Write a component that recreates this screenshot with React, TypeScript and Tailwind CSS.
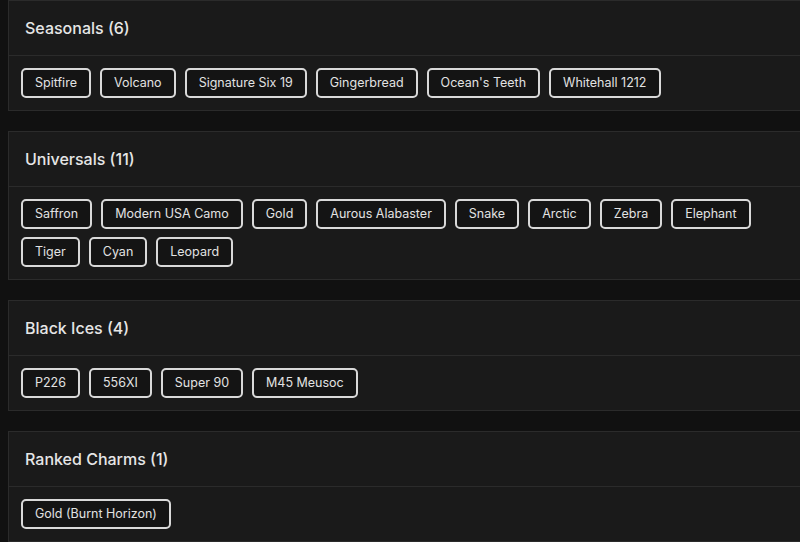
import React from 'react';

const groups: { title: string; items: string[] }[] = [
  { title: 'Seasonals (6)', items: ['Spitfire', 'Volcano', 'Signature Six 19', 'Gingerbread', "Ocean's Teeth", 'Whitehall 1212'] },
  {
    title: 'Universals (11)',
    items: ['Saffron', 'Modern USA Camo', 'Gold', 'Aurous Alabaster', 'Snake', 'Arctic', 'Zebra', 'Elephant', 'Tiger', 'Cyan', 'Leopard'],
  },
  { title: 'Black Ices (4)', items: ['P226', '556XI', 'Super 90', 'M45 Meusoc'] },
  { title: 'Ranked Charms (1)', items: ['Gold (Burnt Horizon)'] },
];

const Chip = ({ label }: { label: string }) => (
  <span className="inline-flex h-[30px] items-center rounded-[5px] border-2 border-[#d9d9d9] bg-[#141414] px-3 text-[12.5px] leading-none text-[#e2e2e2]">
    {label}
  </span>
);

const Card = ({ title, items }: { title: string; items: string[] }) => (
  <section className="w-[820px] border border-[#2b2b2b] bg-[#1a1a1a]">
    <header className="flex h-[55px] items-center border-b border-[#2b2b2b] px-4">
      <h2 className="text-[16px] font-medium text-[#e6e6e6]">{title}</h2>
    </header>
    <div className="flex flex-wrap gap-x-[9px] gap-y-2 p-3">
      {items.map((it) => (
        <Chip key={it} label={it} />
      ))}
    </div>
  </section>
);

export default function App() {
  return (
    <div className="h-[542px] w-[800px] overflow-hidden bg-[#111111]" style={{ fontFamily: 'Inter, "Noto Sans", sans-serif' }}>
      <div className="flex flex-col gap-5 pl-2">
        {groups.map((g) => (
          <Card key={g.title} title={g.title} items={g.items} />
        ))}
      </div>
    </div>
  );
}
